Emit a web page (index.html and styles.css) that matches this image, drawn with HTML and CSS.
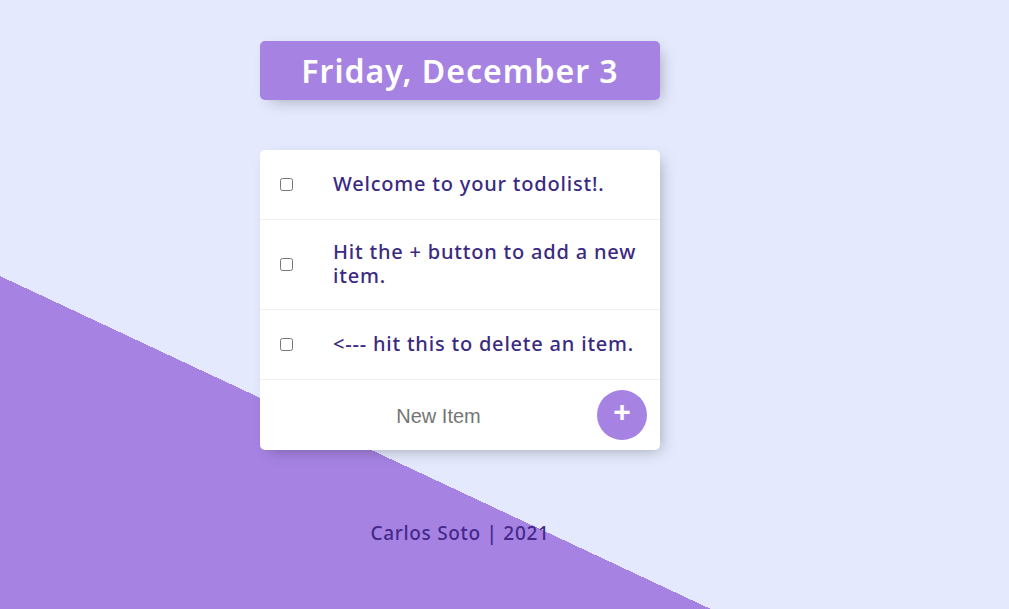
FILE: index.html
```html
<!DOCTYPE html>
<html lang="en">
<head>
<meta charset="utf-8">
<title>To-Do List</title>
<link rel="stylesheet" href="styles.css">
</head>
<body>
  <div class="box heading">
    <h1>Friday, December 3</h1>
  </div>

  <div class="box list">
    <div class="item">
      <input type="checkbox" class="check">
      <p>Welcome to your todolist!.</p>
    </div>
    <div class="item">
      <input type="checkbox" class="check">
      <p>Hit the + button to add a new item.</p>
    </div>
    <div class="item">
      <input type="checkbox" class="check">
      <p>&lt;--- hit this to delete an item.</p>
    </div>
    <form class="item form">
      <input type="text" class="new-item" placeholder="New Item" autocomplete="off">
      <button type="button" class="add">+</button>
    </form>
  </div>

  <footer class="footer">Carlos Soto | 2021</footer>
</body>
</html>
```
FILE: styles.css
```css
html {
  height: 100%;
}

body {
  margin: 0;
  min-height: 100%;
  padding: 41px 89px 0 0;
  box-sizing: border-box;
  background-color: #E4E9FD;
  background-image: linear-gradient(205.1deg, #E4E9FD 678px, #A683E3 678px);
  font-family: "Noto Sans", "Open Sans", sans-serif;
}

.box {
  width: 400px;
  margin: 0 auto 50px;
  background: #fff;
  border-radius: 5px;
  box-shadow: 5px 5px 15px -5px rgba(0, 0, 0, 0.3);
}

.heading {
  background-color: #A683E3;
  text-align: center;
}

.heading h1 {
  margin: 0;
  padding: 10px;
  color: #fff;
  font-size: 32px;
  line-height: 39px;
  font-weight: 600;
  letter-spacing: 1px;
}

.item {
  min-height: 70px;
  display: flex;
  align-items: center;
  border-bottom: 1px solid #F1F1F1;
  box-sizing: border-box;
}

.item:last-child {
  border-bottom: none;
}

.check {
  margin: 20px;
  width: 13px;
  height: 13px;
  flex: none;
}

.item p {
  margin: 0;
  padding: 20px 16px 20px 20px;
  font-size: 20px;
  line-height: 24.4px;
  font-weight: 500;
  letter-spacing: 0.8px;
  color: #3B2A82;
}

.form {
  margin: 0 0 0 20px;
  height: 70px;
}

.new-item {
  width: 313px;
  height: 60px;
  border: none;
  padding: 1px 2px;
  margin-top: 4px;
  text-align: center;
  font-family: "Liberation Sans", Arial, sans-serif;
  font-size: 20px;
  outline: none;
  background: transparent;
}

.new-item::placeholder {
  color: #757575;
}

.add {
  width: 50px;
  height: 50px;
  margin-left: 0;
  border: none;
  border-radius: 50%;
  background-color: #A683E3;
  color: #fff;
  font-family: "Liberation Sans", Arial, sans-serif;
  font-size: 30px;
  font-weight: 700;
  line-height: 1;
  padding: 0 0 6px;
  flex: none;
}

.footer {
  margin-top: 70px;
  text-align: center;
  color: #45288A;
  font-size: 19px;
  font-weight: 500;
  letter-spacing: 0.7px;
}
```
